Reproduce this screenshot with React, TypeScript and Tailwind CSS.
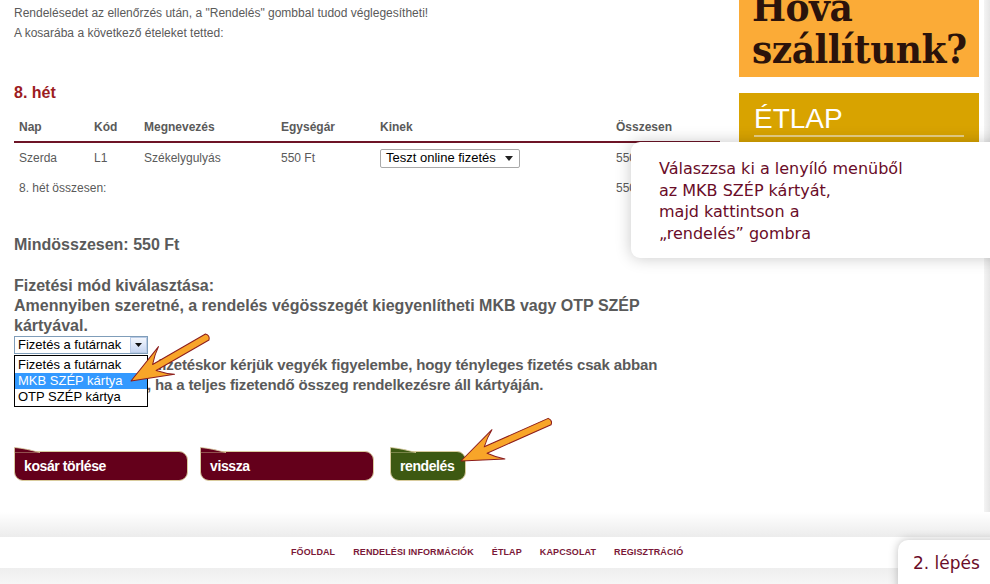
import React from "react";

const body = "font-['Liberation_Sans',Arial,sans-serif]";
const tip = "font-['DejaVu_Sans',Verdana,sans-serif]";

function ArrowPath({ x, y, angle, len }: { x: number; y: number; angle: number; len: number }) {
  const L = len;
  const d = `M ${-L} -3.5 L -27 -3.5 C -31 -8 -35 -12 -41 -16 L 0 0 L -41 16 C -35 12 -31 8 -27 3.5 L ${-L} 3.5 Q ${-L - 3.5} 0 ${-L} -3.5 Z`;
  return (
    <path
      d={d}
      transform={`translate(${x} ${y}) rotate(${angle})`}
      fill="#f8a529"
      stroke="#8c1d1d"
      strokeWidth="1"
      strokeLinejoin="round"
    />
  );
}

function ShopButton({ label, width, green }: { label: string; width: string; green?: boolean }) {
  const fill = green ? "#3d5912" : "#64001b";
  return (
    <div className={`relative ${width}`}>
      <svg className="absolute left-0 top-[-4px]" width="26" height="6" viewBox="0 0 26 6">
        <path d="M0.5 6 L0.5 0.5 C8 1 16 3 26 5.5 L26 6 Z" fill={fill} stroke="#d9cc9e" strokeWidth="0.8" />
      </svg>
      <div
        className={`h-[30px] flex items-center pl-[9px] rounded-tl-none rounded-tr-[9px] rounded-b-[9px] border border-[#d9cc9e] text-white font-bold text-[14px] tracking-[-0.4px] ${body} ${
          green ? "bg-[#3d5912]" : "bg-[#64001b]"
        }`}
      >
        {label}
      </div>
    </div>
  );
}

export default function App() {
  return (
    <div className={`relative w-[990px] h-[584px] overflow-hidden bg-white ${body}`}>
      <div className="flex h-[512px]">
        {/* main content */}
        <div className="w-[739px] pl-[14px] pt-[3px] text-[#5a5a5a]">
          <div className="text-[12px] leading-5">
            <p>Rendelésedet az ellenőrzés után, a "Rendelés" gombbal tudod véglegesítheti!</p>
            <p>A kosarába a következő ételeket tetted:</p>
          </div>

          <h3 className="mt-[40px] text-[16px] leading-5 font-bold text-[#9c1c1f]">8. hét</h3>

          <div className="mt-[10px] w-[706px] text-[12px]">
            <div className="grid grid-cols-[75px_50px_137px_99px_236px_1fr] h-[30px] items-center border-b-2 border-[#6d1426] font-bold">
              <div className="pl-[5px]">Nap</div>
              <div className="pl-[5px]">Kód</div>
              <div className="pl-[5px]">Megnevezés</div>
              <div className="pl-[5px]">Egységár</div>
              <div className="pl-[5px]">Kinek</div>
              <div className="pl-[5px]">Összesen</div>
            </div>
            <div className="grid grid-cols-[75px_50px_137px_99px_236px_1fr] h-[30px] items-center">
              <div className="pl-[5px]">Szerda</div>
              <div className="pl-[5px]">L1</div>
              <div className="pl-[5px]">Székelygulyás</div>
              <div className="pl-[5px]">550 Ft</div>
              <div className="pl-[5px]">
                <div className="w-[140px] h-[19px] flex items-center justify-between border border-[#a9a9a9] rounded-[2px] bg-white pl-[5px] pr-[6px] text-[13px] text-black">
                  <span>Teszt online fizetés</span>
                  <svg width="8" height="5" viewBox="0 0 8 5">
                    <path d="M0 0 L8 0 L4 5 Z" fill="#222" />
                  </svg>
                </div>
              </div>
              <div className="pl-[5px]">550 Ft</div>
            </div>
            <div className="grid grid-cols-[75px_50px_137px_99px_236px_1fr] h-[30px] items-center">
              <div className="col-span-5 pl-[5px]">8. hét összesen:</div>
              <div className="pl-[5px]">550 Ft</div>
            </div>
          </div>

          <p className="mt-[32px] text-[16px] leading-5 font-bold">Mindösszesen: 550 Ft</p>

          <div className="mt-[21px] text-[16px] leading-5 font-bold">
            <p>Fizetési mód kiválasztása:</p>
            <p>
              Amennyiben szeretné, a rendelés végösszegét kiegyenlítheti MKB vagy OTP SZÉP
              <br />
              kártyával.
            </p>
          </div>

          <div className="relative">
            <div className="w-[134px] h-[18px] flex items-stretch border border-[#7f9db9] bg-white text-[13px] text-black">
              <span className="flex-1 pl-[3px] leading-[16px]">Fizetés a futárnak</span>
              <span className="w-[17px] flex items-center justify-center border border-[#b9cbe6] bg-gradient-to-b from-[#f4f7fd] to-[#c7d6f2]">
                <svg width="7" height="4" viewBox="0 0 7 4">
                  <path d="M0 0 L7 0 L3.5 4 Z" fill="#111" />
                </svg>
              </span>
            </div>

            <p className="mt-[1px] text-[15px] leading-5 font-bold tracking-[-0.15px]">
              SZÉP kártyával való fizetéskor kérjük vegyék figyelembe, hogy tényleges fizetés csak abban
              <br />
              az esetben történik, ha a teljes fizetendő összeg rendelkezésre áll kártyáján.
            </p>

            <div className="absolute left-0 top-[19px] w-[134px] border border-black bg-white text-[13px] text-black py-[1px]">
              <div className="h-[16px] leading-[16px] pl-[3px]">Fizetés a futárnak</div>
              <div className="h-[16px] leading-[16px] pl-[3px] bg-[#3399ff] text-white">MKB SZÉP kártya</div>
              <div className="h-[16px] leading-[16px] pl-[3px]">OTP SZÉP kártya</div>
            </div>
          </div>

          <div className="mt-[56px] flex gap-[12px]">
            <ShopButton label="kosár törlése" width="w-[174px]" />
            <ShopButton label="vissza" width="w-[174px]" />
            <div className="ml-[4px]">
              <ShopButton label="rendelés" width="w-[76px]" green />
            </div>
          </div>
        </div>

        {/* sidebar */}
        <div className="w-[240px]">
          <div className="h-[77px] bg-[#fbab37] overflow-hidden pl-[13px]">
            <div className="-mt-[14px] text-[40px] leading-[42px] font-bold font-stretch-condensed text-[#2b130b] font-['DejaVu_Serif',serif] tracking-[-0.5px]">
              <div>Hova</div>
              <div>szállítunk?</div>
            </div>
          </div>
          <div className="mt-[16px] h-[120px] bg-[#d8a300] px-[15px] pt-[10px]">
            <div className="text-[28px] leading-[32px] text-white">ÉTLAP</div>
            <div className="h-[2px] bg-[#e8cf85]" />
          </div>
        </div>

        <div className="w-[5px]" />
        <div className="w-[6px] bg-gradient-to-r from-[#f4f4f4] to-[#e6e6e6]" />
      </div>

      {/* footer */}
      <div className="h-[25px] bg-gradient-to-b from-white to-[#ececec]" />
      <div className="h-[31px] bg-white flex items-center pl-[291px] gap-[18px] text-[9px] font-bold tracking-[0.1px] text-[#7a1838]">
        <span>FŐOLDAL</span>
        <span>RENDELÉSI INFORMÁCIÓK</span>
        <span>ÉTLAP</span>
        <span>KAPCSOLAT</span>
        <span>REGISZTRÁCIÓ</span>
      </div>
      <div className="h-[16px] bg-gradient-to-b from-[#eeeeee] to-[#f6f6f6]" />

      {/* instruction bubble */}
      <div
        className={`absolute left-[631px] top-[142px] w-[380px] h-[116px] bg-white rounded-[9px] shadow-[0_0_16px_rgba(0,0,0,0.22)] pl-[28px] pt-[16px] text-[16px] leading-[21.5px] text-[#6a0c28] ${tip}`}
      >
        <p>Válaszzsa ki a lenyíló menüből</p>
        <p>az MKB SZÉP kártyát,</p>
        <p>majd kattintson a</p>
        <p>„rendelés” gombra</p>
      </div>

      {/* step label */}
      <div
        className={`absolute left-[898px] top-[540px] w-[110px] h-[60px] bg-white rounded-tl-[10px] shadow-[0_0_10px_rgba(0,0,0,0.25)] pl-[15px] pt-[12px] text-[17px] leading-[22px] text-[#6a0c28] ${tip}`}
      >
        2. lépés
      </div>

      {/* annotation arrows */}
      <svg className="absolute inset-0 pointer-events-none" width="990" height="584">
        <ArrowPath x={131} y={381} angle={150} len={88} />
        <ArrowPath x={461} y={461} angle={156} len={97} />
      </svg>
    </div>
  );
}
